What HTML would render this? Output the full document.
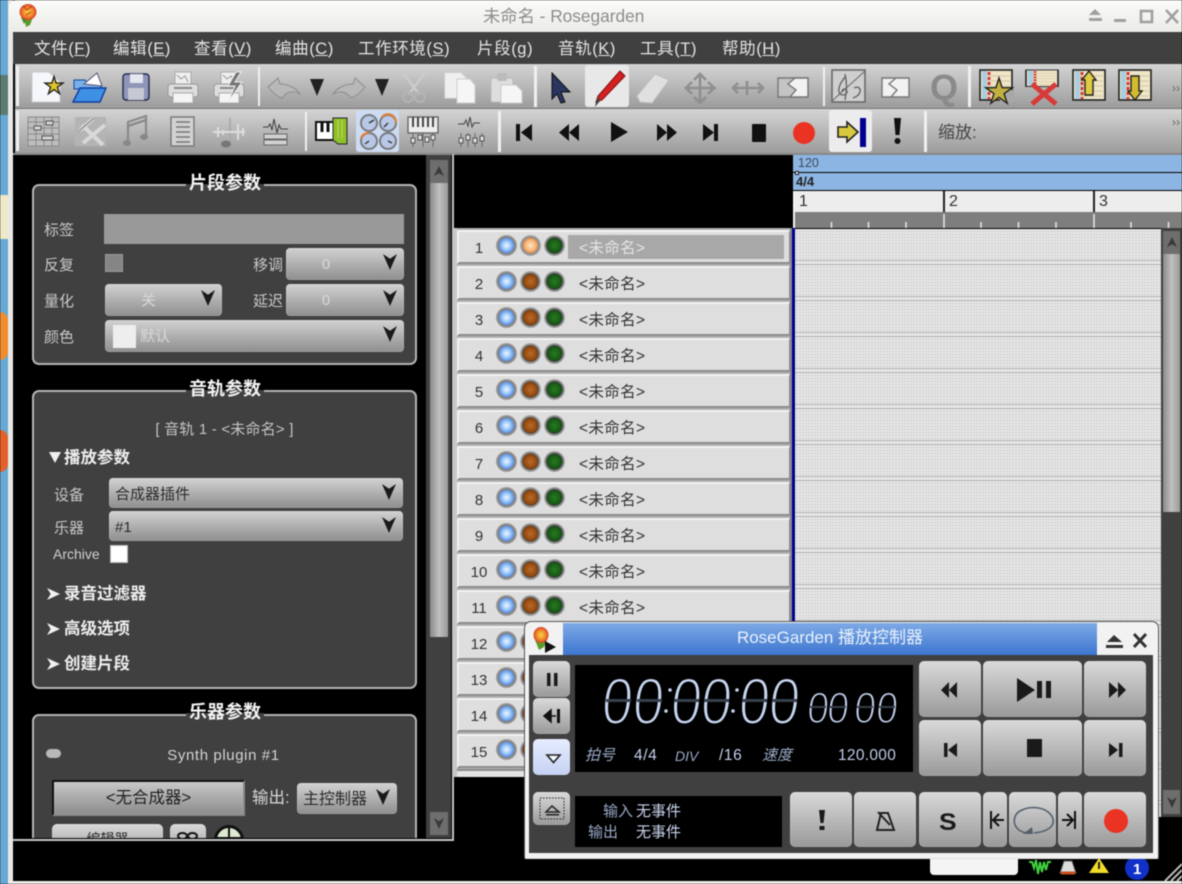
<!DOCTYPE html>
<html lang="zh"><head><meta charset="utf-8"><title>Rosegarden</title>
<style>
*{box-sizing:border-box}
html,body{margin:0;padding:0;background:#000}
body{width:1182px;height:884px;overflow:hidden;position:relative;font-family:"Liberation Sans","Noto Sans CJK SC",sans-serif}
#w{position:absolute;left:0;top:0;width:1182px;height:884px;overflow:hidden;filter:blur(.5px);background:#000}
.a,.t,.c,.b,.g,.r{position:absolute}
.t{white-space:nowrap;line-height:20px;height:20px}
.m{top:39px;font-size:16.5px;letter-spacing:.6px;color:#e4e4e4}
.g{left:32px;width:385px;border:2px solid #b4b4b4;border-radius:7px;background:#404040}
.h{position:absolute;width:78px;left:186px;height:22px;line-height:22px;text-align:center;font-weight:bold;font-size:18px;color:#f4f4f4;background:linear-gradient(#000 0 12px,#404040 12px)}
.l1{font-size:15px;color:#c8c8c8}
.s{font-size:16.5px;font-weight:bold;color:#eee}
.ar{position:absolute;width:13px;height:12px;background:#f0f0f0;clip-path:polygon(0 0,100% 50%,0 100%,28% 50%)}
.c{border-radius:4px;background:linear-gradient(#d2d2d2,#8e8e8e);box-shadow:inset 0 0 0 1px rgba(255,255,255,.12);font-size:15px;color:#d8d8d8;line-height:33px}
.c::after{content:"";position:absolute;right:7px;top:6px;width:14px;height:16px;background:#1a1a1a;clip-path:polygon(0 0,50% 30%,100% 0,50% 100%)}
.b{border-radius:5px;background:linear-gradient(#dadada,#999);box-shadow:inset 0 0 0 1px rgba(255,255,255,.1)}
.tb{position:absolute;left:15px;right:0;background:linear-gradient(#d4d4d4,#9c9c9c)}
.r{left:457px;width:333px;height:34px;background:#dedede;border-top:2px solid #f2f2f2;border-left:2px solid #f2f2f2;border-bottom:2px solid #8c8c8c;border-right:1px solid #8c8c8c}
.r b{position:absolute;left:0;width:40px;text-align:center;top:7px;font-weight:normal;font-size:15px;line-height:20px;color:#333}
.r span{position:absolute;left:120px;top:7px;font-size:15.5px;letter-spacing:.35px;line-height:20px;color:#333;white-space:nowrap}
.r i{position:absolute;width:21px;height:21px;border-radius:50%;top:3px}
.i1{left:36.500px;background:radial-gradient(closest-side,#f0f8ff 0,#a8d0fc 35%,#5f98e8 68%,#7d7d7d 76%,#a4a4a4 100%)}
.i2{left:60.500px;background:radial-gradient(closest-side,#b86a28 0,#93480f 62%,#5c4028 72%,#8a8a8a 84%,#b0b0b0 100%)}
.i3{left:84.500px;background:radial-gradient(closest-side,#2a7a22 0,#145a12 62%,#2c3c2c 72%,#808080 84%,#b0b0b0 100%)}
.r i.on{background:radial-gradient(closest-side,#ffe6c8 0,#f4b070 55%,#e09050 68%,#8a8a8a 78%,#b0b0b0 100%)}
.lc{font-size:15px;color:#b4c4e4}
</style></head><body>
<div id="w">
<!-- desktop strip -->
<div class="a" style="left:0;top:0;width:8px;height:884px;background:#67a8d4"></div>
<div class="a" style="left:0;top:75px;width:8px;height:40px;background:#5c7a70"></div>
<div class="a" style="left:0;top:195px;width:8px;height:44px;background:#efe9c8"></div>
<div class="a" style="left:0;top:312px;width:8px;height:48px;background:#ef8d2f;border-radius:0 10px 10px 0"></div>
<div class="a" style="left:0;top:430px;width:8px;height:42px;background:#e2612a;border-radius:0 10px 10px 0"></div>
<div class="a" style="left:8px;top:0;width:5px;height:884px;background:#e8e8e6"></div>
<div class="a" style="left:8px;top:881px;width:1174px;height:3px;background:#ecece9"></div>
<!-- title bar -->
<div class="a" style="left:9px;top:0;width:1173px;height:32px;background:linear-gradient(#fbfbf9,#ebebe8);border-radius:7px 0 0 0"></div>
<div class="t" style="left:483px;top:6px;font-size:17.300px;color:#8c8c8c">未命名 - Rosegarden</div>
<!-- menu -->
<div class="a" style="left:13px;top:32px;width:1169px;height:32px;background:#404040"></div>
<div class="t m" style="left:34px">文件(<u>F</u>)</div>
<div class="t m" style="left:113px">编辑(<u>E</u>)</div>
<div class="t m" style="left:194px">查看(<u>V</u>)</div>
<div class="t m" style="left:275px">编曲(<u>C</u>)</div>
<div class="t m" style="left:358px">工作环境(<u>S</u>)</div>
<div class="t m" style="left:477px">片段(<u>g</u>)</div>
<div class="t m" style="left:558px">音轨(<u>K</u>)</div>
<div class="t m" style="left:640px">工具(<u>T</u>)</div>
<div class="t m" style="left:722px">帮助(<u>H</u>)</div>
<!-- toolbars -->
<div class="tb" style="top:64px;height:44px"></div>
<div class="tb" style="top:109px;height:44px"></div>
<div class="a" style="left:15px;top:108px;width:1167px;height:1px;background:#777"></div>
<div class="a" style="left:585px;top:65px;width:44px;height:42px;background:#e8e8e8;border-radius:3px"></div>
<div class="a" style="left:356px;top:110px;width:43px;height:42px;background:#cddcf2;border-radius:3px"></div>
<div class="a" style="left:829px;top:110px;width:43px;height:42px;background:#ececec;border-radius:3px"></div>
<div class="t" style="left:938px;top:123px;font-size:17px;color:#444">缩放:</div>
<div class="t" style="left:1172px;top:78px;font-size:12px;color:#666">››</div>
<div class="t" style="left:1172px;top:112px;font-size:12px;color:#666">››</div>

<svg class="a" style="left:0;top:0" width="1182" height="156" viewBox="0 0 1182 156">
<defs>
<path id="star" d="M0-1 .223-.307.951-.309.361.118.588.809 0 .38-.588.809-.361.118-.951-.309-.223-.307Z"/>
<g id="prn"><rect x="8" y="0" width="16" height="13" fill="#eee" stroke="#aaa"/><rect x="1" y="12" width="30" height="13" rx="3" fill="#ddd" stroke="#999"/><rect x="6" y="21" width="20" height="10" fill="#f4f4f4" stroke="#aaa"/><path d="M7 16h18" stroke="#888" stroke-width="2"/><path d="M10 3l4 4 4-3 3 6" fill="none" stroke="#9a9a9a"/></g>
<g id="sheet"><rect x="0" y="0" width="32" height="30" fill="#efe6c8" stroke="#222" stroke-width="1.6"/><path d="M3 6h27M3 11h27M3 16h27M3 21h27M3 26h27" stroke="#d4c8a8"/><rect x="2" y="1" width="5" height="28" fill="#a8cfe0"/><path d="M9 2v27" stroke="#d83838" stroke-width="3" stroke-dasharray="3 2"/></g>
<radialGradient id="rs"><stop offset="0" stop-color="#f7d24a"/><stop offset=".6" stop-color="#ef8a2a"/><stop offset="1" stop-color="#d8402a"/></radialGradient>
</defs>
<!-- rose -->
<path d="M24 17 26 27 30 25 33 17Z" fill="#5a9c2a"/><path d="M21 17l6 2-3 5z" fill="#4a8a22"/><ellipse cx="28" cy="12" rx="8.500" ry="8" fill="url(#rs)"/><path d="M23 6l4 4 5-4M31 12l-5 3" fill="none" stroke="#c43020"/>
<!-- wm buttons -->
<g fill="#a0a0a0"><path d="M1089 15l6-6 6 6z"/><rect x="1089" y="18" width="13" height="3"/><rect x="1114" y="19" width="12" height="3"/></g>
<rect x="1141" y="11" width="11" height="11" fill="none" stroke="#a0a0a0" stroke-width="2.6"/>
<path d="M1166 10l12 13m0-13l-12 13" stroke="#a0a0a0" stroke-width="2.6"/>
<!-- handles / separators -->
<g fill="#f0f0f0"><rect x="16" y="66" width="3" height="40"/><rect x="16" y="111" width="3" height="40"/><rect x="258" y="67" width="2" height="39"/><rect x="534" y="66" width="3" height="41"/><rect x="823" y="67" width="2" height="39"/><rect x="968" y="66" width="3" height="41"/><rect x="305" y="112" width="2" height="39"/><rect x="498" y="111" width="3" height="41"/><rect x="924" y="111" width="3" height="41"/></g>
<!-- toolbar 1 -->
<path d="M32 72H49L60 82V102H32Z" fill="#f5f7fb" stroke="#c8c8d0"/>
<use href="#star" transform="translate(54 86) scale(9.500)" fill="#e0c428" stroke="#222" stroke-width=".14"/>
<path d="M74 80h11l3 3h13v6H74Z" fill="#7ab0e8" stroke="#1048a8"/><path d="M84 84 97 73 102 86Z" fill="#fff" stroke="#557"/><path d="M73 102 80 88H106L100 102Z" fill="#3f8fe4" stroke="#0d3ea0" stroke-width="1.4"/>
<rect x="123" y="74" width="26" height="26" rx="3" fill="#9096b8" stroke="#222a50" stroke-width="1.4"/><rect x="130" y="74" width="13" height="9" fill="#e4e6f0"/><rect x="128" y="88" width="16" height="12" fill="#c6c8d4"/>
<use href="#prn" x="167" y="72"/>
<use href="#prn" x="213" y="72"/><path d="M236 72l-8 14h7l-7 16 14-20h-7l6-10z" fill="#777" stroke="#eee"/>
<path d="M268 87 278 78 280 84C288 84 296 88 300 94 292 90 286 92 282 98 276 96 272 92 268 87Z" fill="#b8b8b8" stroke="#8c8c8c"/>
<path d="M310 79h14l-7 17z" fill="#222"/>
<path d="M365 87 355 78 353 84C345 84 337 88 333 94 341 90 347 92 351 98 357 96 361 92 365 87Z" fill="#b8b8b8" stroke="#8c8c8c"/>
<path d="M375 79h14l-7 17z" fill="#222"/>
<path d="M425 73 409 94M404 74 419 94" stroke="#ccc" stroke-width="2.4"/><circle cx="408" cy="97" r="5" fill="none" stroke="#b4b4b4" stroke-width="2"/><circle cx="420" cy="97" r="5" fill="none" stroke="#b4b4b4" stroke-width="2"/>
<path d="M445 73h16l7 7v18h-23Z" fill="#f0f0f0" stroke="#ddd"/><path d="M457 79h13l5 6v18h-18Z" fill="#f6f6f6" stroke="#ccc"/>
<rect x="491" y="78" width="22" height="24" rx="2" fill="#dedede" stroke="#bbb"/><rect x="497" y="73" width="10" height="8" rx="2" fill="#bbb"/><path d="M501 85h15l6 6v12h-21Z" fill="#f6f6f6" stroke="#ccc"/>
<path d="M552 73 570 92 561 92 565 102 561 103 557 94 552 99Z" fill="#2a3560" stroke="#111"/>
<path d="M620 71 625 76 602 100 596 102 598 96Z" fill="#d42020" stroke="#801010"/><path d="M598 96 596 102 595 107 600 101Z" fill="#444"/>
<path d="M637 96 655 74 669 80 652 103 640 102Z" fill="#e0e0e0" stroke="#c0c0c0"/>
<g fill="none" stroke="#8f8f8f" stroke-width="2.6"><path d="M700 74v30M685 88h31"/><path d="M692 82l-6 6 6 6M708 82l6 6-6 6M694 80l6-6 6 6M694 97l6 6 6-6"/></g>
<g fill="none" stroke="#8f8f8f" stroke-width="2.6"><path d="M733 88h30M747 81v14"/><path d="M738 83l-5 5 5 5M758 83l5 5-5 5"/></g>
<path d="M778 78H808V97H778Z" fill="#c4c4c4" stroke="#777" stroke-width="1.4"/><path d="M795 78 788 84 796 90 790 97H808V78Z" fill="#f2f2f2" stroke="#777" stroke-width="1.4"/>
<rect x="832" y="70" width="33" height="32" fill="#cfcfcf" stroke="#6a6a6a" stroke-width="1.6"/><path d="M832 101 865 71" stroke="#666"/><path d="M846 76c-5 6-8 11-7 16 1 4 7 4 8 0 0-4-5-4-5 0M845 74c2 8 2 16 0 26" fill="none" stroke="#666" stroke-width="1.4"/><path d="M854 88c4-2 7 0 6 4-1 3-4 5-7 6" fill="none" stroke="#666" stroke-width="1.4"/>
<path d="M882 78H909V97H882Z" fill="#f2f2f2" stroke="#777" stroke-width="1.4"/><path d="M896 78 889 84 897 90 891 97" fill="none" stroke="#777" stroke-width="1.4"/>
<text x="930" y="100" font-family="Liberation Sans" font-weight="bold" font-size="36" fill="#8a8a8a">Q</text>
<use href="#sheet" x="980" y="70"/><rect x="1000" y="90" width="14" height="12" fill="#a8a8a8"/><use href="#star" transform="translate(999 92) scale(14)" fill="#c4b040" stroke="#222" stroke-width=".1"/>
<g transform="translate(1026 70)"><use href="#sheet" transform="scale(1 .55)"/></g><path d="M1032 84 1056 104M1056 84 1032 104" stroke="#d83a3a" stroke-width="5"/>
<use href="#sheet" x="1073" y="70"/><path d="M1089 71 1096 80H1093V95H1085V80H1082Z" fill="#e0cc40" stroke="#222" stroke-width="1.4"/>
<use href="#sheet" x="1119" y="70"/><path d="M1135 100 1142 91H1139V76H1131V91H1128Z" fill="#d4bc30" stroke="#222" stroke-width="1.4"/>
<!-- toolbar 2 -->
<g fill="none" stroke="#8a8a8a"><rect x="28" y="117" width="31" height="29" fill="#bdbdbd"/><path d="M28 122h31M28 128h31M28 134h31M28 140h31M36 117v29M44 117v29M52 117v29"/></g><g fill="#d4d4d4" stroke="#555"><rect x="34" y="126" width="7" height="4"/><rect x="46" y="121" width="7" height="4"/><rect x="42" y="136" width="11" height="4"/></g>
<rect x="75" y="117" width="31" height="29" fill="#b4b4b4"/><path d="M80 130l13-11M83 143l22-18M82 125l21 20" stroke="#d8d8d8" stroke-width="4"/><path d="M80 130l13-11" stroke="#777" stroke-width="1"/>
<path d="M128 141V122L146 116V136" fill="none" stroke="#8a8a8a" stroke-width="2.2"/><ellipse cx="127" cy="143" rx="4" ry="3" fill="#888"/><ellipse cx="144" cy="137" rx="4" ry="3" fill="#888"/><path d="M128 126l18-6" stroke="#8a8a8a" stroke-width="2.5"/>
<rect x="171" y="117" width="23" height="29" fill="#d2d2d2" stroke="#777" stroke-width="1.4"/><path d="M176 122h14M176 127h14M176 132h14M176 137h14M176 142h14" stroke="#777" stroke-width="1.4"/>
<path d="M230 118V144" stroke="#aaa" stroke-width="2"/><ellipse cx="226" cy="144" rx="5" ry="3.5" fill="#777"/><path d="M213 132h32M218 127v10M238 124v16M243 128v8M223 130v5" stroke="#ddd" stroke-width="2"/>
<path d="M263 127h5l2-3 2 6 2-11 3 14 2-8 2 4h7" fill="none" stroke="#444" stroke-width="1.1"/><rect x="264" y="134" width="23" height="5" fill="#d0d0d0" stroke="#666"/><rect x="264" y="140" width="23" height="5" fill="#d0d0d0" stroke="#666"/>
<rect x="316" y="122" width="22" height="18" fill="#fff" stroke="#111" stroke-width="2"/><path d="M322 122v10M328 122v10M334 122v10" stroke="#111" stroke-width="3"/><path d="M333 118H347V144H338L333 140Z" fill="#8ec02a" stroke="#223"/><path d="M338 120V138M342 120V138" stroke="#c8d860"/>
<g fill="#b8c8e6" stroke="#7a7a80" stroke-width="2"><circle cx="369" cy="123" r="8"/><circle cx="388" cy="123" r="8"/><circle cx="369" cy="141" r="8"/><circle cx="388" cy="141" r="8"/></g><path d="M382 117a8 8 0 0 1 14 6M361 138a8 8 0 0 1 8-5" fill="none" stroke="#e08038" stroke-width="2.2"/><path d="M369 123l5-3M388 123l-4 4M369 141l-4 3M388 141l4 2" stroke="#333" stroke-width="1.4"/>
<rect x="408" y="117" width="30" height="16" fill="#eee" stroke="#666" stroke-width="1.4"/><path d="M413 117v10M418 117v10M423 117v10M428 117v10M433 117v10" stroke="#444" stroke-width="2"/><path d="M413 133v14M423 133v14M433 133v14" stroke="#666"/><g fill="#ddd" stroke="#555"><rect x="411" y="138" width="4" height="5"/><rect x="418" y="135" width="4" height="5"/><rect x="425" y="137" width="4" height="5"/><rect x="431" y="135" width="4" height="5"/></g>
<path d="M458 124h6l2-4 2 6 2-9 2 10 2-4h6" fill="none" stroke="#444" stroke-width="1"/><path d="M461 133v14M468 133v14M475 133v14M482 133v14" stroke="#666"/><g fill="#ddd" stroke="#555"><rect x="459" y="138" width="4" height="5"/><rect x="466" y="135" width="4" height="5"/><rect x="473" y="138" width="4" height="5"/><rect x="480" y="136" width="4" height="5"/></g>
<g fill="#111"><rect x="516" y="124" width="4" height="17"/><path d="M532 124V141L521 132.5Z"/><path d="M569 124V141L559 132.5ZM579 124V141L569 132.5Z"/><path d="M611 122V142L628 132Z"/><path d="M657 124V141L667 132.5ZM667 124V141L677 132.5Z"/><path d="M703 124V141L714 132.5Z"/><rect x="714" y="124" width="4" height="17"/><rect x="752" y="124" width="14" height="18" rx="1"/></g>
<circle cx="804" cy="133" r="11" fill="#ea3323"/>
<path d="M838 127h9v-5l11 10-11 10v-5h-9Z" fill="#d8c840" stroke="#222" stroke-width="1.6"/><rect x="860" y="118" width="6" height="29" fill="#000090"/>
<path d="M894 118h7l-1.5 17h-4Z" fill="#111"/><circle cx="897.500" cy="141" r="3" fill="#111"/>
</svg>

<!-- left panel -->
<div class="a" style="left:13px;top:153px;width:441px;height:688px;border-right:2px solid #c4c4c4;border-bottom:2px solid #c4c4c4;border-top:2px solid #888;background:#000"></div>
<div class="a" style="left:426px;top:155px;width:25px;height:683px;background:#404040"></div>
<div class="a" style="left:430px;top:160px;width:18px;height:23px;background:#6e6e6e"></div>
<div class="a" style="left:434px;top:166px;width:10px;height:10px;background:#3a3a3a;clip-path:polygon(50% 0,100% 100%,50% 72%,0 100%)"></div>
<div class="a" style="left:430px;top:183px;width:18px;height:454px;background:linear-gradient(90deg,#8a8a8a,#c0c0c0 50%,#9a9a9a)"></div>
<div class="a" style="left:430px;top:812px;width:18px;height:23px;background:#6e6e6e"></div>
<div class="a" style="left:434px;top:818px;width:10px;height:11px;background:#3a3a3a;clip-path:polygon(0 0,50% 30%,100% 0,50% 100%)"></div>

<div class="g" style="top:184px;height:181px"></div>
<div class="h" style="top:172px">片段参数</div>
<div class="t l1" style="left:44px;top:221px">标签</div>
<div class="a" style="left:104px;top:214px;width:300px;height:30px;background:#999"></div>
<div class="t l1" style="left:44px;top:256px">反复</div>
<div class="a" style="left:105px;top:254px;width:18px;height:18px;background:#858585;border:1px solid #999"></div>
<div class="t l1" style="left:253px;top:256px">移调</div>
<div class="c" style="left:286px;top:248px;width:118px;height:32px;text-align:center;padding-right:38px">0</div>
<div class="t l1" style="left:44px;top:292px">量化</div>
<div class="c" style="left:105px;top:284px;width:117px;height:32px;text-align:center;padding-right:30px">关</div>
<div class="t l1" style="left:253px;top:292px">延迟</div>
<div class="c" style="left:286px;top:284px;width:118px;height:32px;text-align:center;padding-right:38px">0</div>
<div class="t l1" style="left:44px;top:328px">颜色</div>
<div class="c" style="left:105px;top:320px;width:299px;height:32px;padding-left:35px">默认</div>
<div class="a" style="left:113px;top:325px;width:23px;height:23px;background:#eee"></div>

<div class="g" style="top:390px;height:299px"></div>
<div class="h" style="top:378px">音轨参数</div>
<div class="t" style="left:32px;width:385px;text-align:center;top:420px;font-size:15px;letter-spacing:.2px;color:#c4c4c4">[ 音轨 1 - &lt;未命名&gt; ]</div>
<div class="a" style="left:49px;top:452px;width:12px;height:11px;background:#f0f0f0;clip-path:polygon(0 0,100% 0,50% 100%)"></div>
<div class="t s" style="left:64px;top:448px">播放参数</div>
<div class="t l1" style="left:54px;top:486px">设备</div>
<div class="c" style="left:109px;top:478px;width:294px;height:30px;padding-left:6px;color:#2c2c2c">合成器插件</div>
<div class="t l1" style="left:54px;top:519px">乐器</div>
<div class="c" style="left:109px;top:511px;width:294px;height:30px;padding-left:6px;color:#2c2c2c">#1</div>
<div class="t" style="left:53px;top:544px;font-size:14px;color:#d0d0d0">Archive</div>
<div class="a" style="left:110px;top:545px;width:18px;height:18px;background:#fff;border:1px solid #bbb"></div>
<div class="ar" style="left:47px;top:588px"></div>
<div class="t s" style="left:64px;top:584px">录音过滤器</div>
<div class="ar" style="left:47px;top:623px"></div>
<div class="t s" style="left:64px;top:619px">高级选项</div>
<div class="ar" style="left:47px;top:658px"></div>
<div class="t s" style="left:64px;top:654px">创建片段</div>

<div class="a" style="left:13px;top:700px;width:413px;height:138px;overflow:hidden">
 <div class="g" style="left:19px;top:14px;height:200px"></div>
 <div class="h" style="left:173px;top:1px">乐器参数</div>
 <div class="a" style="left:33px;top:49px;width:15px;height:9px;border-radius:5px;background:#b8b8b8"></div>
 <div class="t" style="left:19px;width:383px;text-align:center;top:46px;font-size:15px;letter-spacing:.6px;color:#d4d4d4">Synth plugin #1</div>
 <div class="b" style="left:39px;top:80px;width:193px;height:36px;border-radius:0;border:2px solid;border-color:#111 #888 #888 #111;text-align:center;font-size:16.5px;color:#222;line-height:33px;background:linear-gradient(#c8c8c8,#8c8c8c)">&lt;无合成器&gt;</div>
 <div class="t" style="left:239px;top:88px;font-size:16.5px;color:#d8d8d8">输出:</div>
 <div class="c" style="left:284px;top:83px;width:100px;height:31px;padding-left:6px;font-size:16px;color:#2c2c2c;white-space:nowrap">主控制器</div>
 <div class="b" style="left:39px;top:124px;width:111px;height:30px;text-align:center;font-size:14px;line-height:30px;color:#222">编辑器</div>
 <div class="b" style="left:157px;top:124px;width:36px;height:30px"></div>
 <div class="a" style="left:164px;top:132px;width:11px;height:8px;border:2px solid #111;border-radius:50%"></div>
 <div class="a" style="left:174px;top:132px;width:11px;height:8px;border:2px solid #111;border-radius:50%"></div>
 <div class="a" style="left:201px;top:125px;width:30px;height:30px;border-radius:50%;background:#dfe8d0;border:3px solid #111"></div>
 <div class="a" style="left:215px;top:127px;width:2px;height:20px;background:#111"></div>
 <div class="a" style="left:204px;top:137px;width:24px;height:2px;background:#111"></div>
</div>

<!-- ruler -->
<div class="a" style="left:454px;top:153px;width:728px;height:2px;background:#888"></div>
<div class="a" style="left:793px;top:155px;width:389px;height:17px;background:#8db5e3"></div>
<div class="a" style="left:793px;top:173px;width:389px;height:17px;background:#8db5e3"></div>
<div class="a" style="left:795px;top:171px;width:4px;height:4px;background:#eee;border:1px solid #222"></div>
<div class="t" style="left:798px;top:153px;font-size:12.500px;color:#3a4a60">120</div>
<div class="t" style="left:796px;top:172px;font-size:13px;font-weight:bold;color:#222">4/4</div>
<div class="a" style="left:794px;top:191px;width:388px;height:21px;background:#ededed"></div>
<div class="a" style="left:794px;top:212px;width:388px;height:16px;background:#7e7e7e"></div>
<div class="a" style="left:793px;top:191px;width:2px;height:37px;background:#f4f4f4"></div>
<div class="a" style="left:943px;top:191px;width:2px;height:21px;background:#222"></div>
<div class="a" style="left:1093px;top:191px;width:2px;height:21px;background:#222"></div>
<div class="t" style="left:799px;top:192px;font-size:16px;color:#333">1</div>
<div class="t" style="left:949px;top:192px;font-size:16px;color:#333">2</div>
<div class="t" style="left:1099px;top:192px;font-size:16px;color:#333">3</div>
<svg class="a" style="left:794px;top:212px" width="388" height="16"><g stroke="#e8e8e8" stroke-width="1.500"><path d="M37.500 10V16M74.500 10V16M112 10V16M187 10V16M224.500 10V16M262 10V16M337 10V16M374.500 10V16"/><path d="M150 2V16M300 2V16"/></g></svg>

<!-- track list backing -->
<div class="a" style="left:454px;top:228px;width:338px;height:549px;background:#b0b0b0;border-left:3px solid #c8c8c8"></div>
<div class="a" style="left:790px;top:228px;width:2px;height:549px;background:#8a8a8a"></div>
<div class="a" style="left:792px;top:228px;width:3px;height:549px;background:#000090"></div>
<div class="a" style="left:457px;top:769px;width:333px;height:8px;background:#e4e4e4;border-top:2px solid #8c8c8c"></div>

<div class="r" style="top:230px"><b>1</b><i class="i1"></i><i class="i2 on"></i><i class="i3"></i><div class="a" style="left:109px;top:3px;width:216px;height:24px;background:#a8a8a8"></div><span style="color:#e4e4e4">&lt;未命名&gt;</span></div>
<div class="r" style="top:266px"><b>2</b><i class="i1"></i><i class="i2"></i><i class="i3"></i><span>&lt;未命名&gt;</span></div>
<div class="r" style="top:302px"><b>3</b><i class="i1"></i><i class="i2"></i><i class="i3"></i><span>&lt;未命名&gt;</span></div>
<div class="r" style="top:338px"><b>4</b><i class="i1"></i><i class="i2"></i><i class="i3"></i><span>&lt;未命名&gt;</span></div>
<div class="r" style="top:374px"><b>5</b><i class="i1"></i><i class="i2"></i><i class="i3"></i><span>&lt;未命名&gt;</span></div>
<div class="r" style="top:410px"><b>6</b><i class="i1"></i><i class="i2"></i><i class="i3"></i><span>&lt;未命名&gt;</span></div>
<div class="r" style="top:446px"><b>7</b><i class="i1"></i><i class="i2"></i><i class="i3"></i><span>&lt;未命名&gt;</span></div>
<div class="r" style="top:482px"><b>8</b><i class="i1"></i><i class="i2"></i><i class="i3"></i><span>&lt;未命名&gt;</span></div>
<div class="r" style="top:518px"><b>9</b><i class="i1"></i><i class="i2"></i><i class="i3"></i><span>&lt;未命名&gt;</span></div>
<div class="r" style="top:554px"><b>10</b><i class="i1"></i><i class="i2"></i><i class="i3"></i><span>&lt;未命名&gt;</span></div>
<div class="r" style="top:590px"><b>11</b><i class="i1"></i><i class="i2"></i><i class="i3"></i><span>&lt;未命名&gt;</span></div>
<div class="r" style="top:626px"><b>12</b><i class="i1"></i><i class="i2"></i><i class="i3"></i><span>&lt;未命名&gt;</span></div>
<div class="r" style="top:662px"><b>13</b><i class="i1"></i><i class="i2"></i><i class="i3"></i><span>&lt;未命名&gt;</span></div>
<div class="r" style="top:698px"><b>14</b><i class="i1"></i><i class="i2"></i><i class="i3"></i><span>&lt;未命名&gt;</span></div>
<div class="r" style="top:734px"><b>15</b><i class="i1"></i><i class="i2"></i><i class="i3"></i><span>&lt;未命名&gt;</span></div>

<!-- segment canvas -->
<div class="a" style="left:795px;top:229px;width:366px;height:588px;background:repeating-linear-gradient(90deg,rgba(255,255,255,.3) 0 1px,rgba(0,0,0,0) 1px 3px),repeating-linear-gradient(0deg,rgba(0,0,0,.06) 0 1px,rgba(0,0,0,0) 1px 3px),repeating-linear-gradient(180deg,#e0e0e0 0 31px,#b4b4b4 31px 32px,#e6e6e6 32px 35px,#b0b0b0 35px 36px)"></div>
<div class="a" style="left:1161px;top:228px;width:21px;height:589px;background:#404040"></div>
<div class="a" style="left:1163px;top:231px;width:17px;height:23px;background:#6e6e6e"></div>
<div class="a" style="left:1167px;top:237px;width:10px;height:10px;background:#3a3a3a;clip-path:polygon(50% 0,100% 100%,50% 72%,0 100%)"></div>
<div class="a" style="left:1163px;top:254px;width:17px;height:258px;background:linear-gradient(90deg,#8a8a8a,#c0c0c0 50%,#9a9a9a)"></div>
<div class="a" style="left:1163px;top:790px;width:17px;height:24px;background:#6e6e6e"></div>
<div class="a" style="left:1167px;top:797px;width:10px;height:11px;background:#3a3a3a;clip-path:polygon(0 0,50% 30%,100% 0,50% 100%)"></div>

<!-- status bar -->
<div class="a" style="left:930px;top:858px;width:88px;height:17px;background:#f4f4f4;border-radius:0 0 4px 4px"></div>
<svg class="a" style="left:1020px;top:855px" width="162" height="26"><path d="M9 7h3l2 6 2-8 2 14 2-12 2 10 2-10 2 8 2-8h3" fill="none" stroke="#3fd03f" stroke-width="2"/><path d="M44 6h8l4 12H40Z" fill="#ddd" stroke="#555"/><path d="M41 18h14" stroke="#c85020" stroke-width="3"/><path d="M69 18 79 3 89 18Z" fill="#f0dc28"/><path d="M79 7v7" stroke="#222" stroke-width="2"/><circle cx="117" cy="13" r="12" fill="#1030c8"/><text x="113" y="19" font-family="Liberation Sans" font-weight="bold" font-size="15" fill="#fff">1</text><path d="M145 26 162 9M151 26 162 15M157 26 162 21" stroke="#bbb" stroke-width="2"/></svg>

<!-- transport window -->
<div class="a" style="left:524px;top:621px;width:635px;height:238px;background:#f2f2f2;border-radius:7px 7px 2px 2px;border:1px solid #555;border-bottom-color:#ddd"></div>
<div class="a" style="left:529px;top:655px;width:624px;height:198px;background:#404040"></div>
<div class="a" style="left:563px;top:623px;width:534px;height:32px;background:linear-gradient(#7da9e6,#3d76cf)"></div>
<div class="t" style="left:563px;width:534px;text-align:center;top:628px;font-size:17px;color:#eaf1fb">RoseGarden 播放控制器</div>
<div class="a" style="left:575px;top:665px;width:338px;height:107px;background:#000"></div>
<div class="a" style="left:575px;top:796px;width:207px;height:51px;background:#000"></div>

<div class="b" style="left:533px;top:661px;width:37px;height:36px"></div>
<div class="b" style="left:533px;top:698px;width:37px;height:36px"></div>
<div class="b" style="left:533px;top:739px;width:37px;height:36px;background:linear-gradient(#e6ecff,#c6d2f4)"></div>
<div class="b" style="left:533px;top:792px;width:37px;height:33px"></div>
<div class="b" style="left:790px;top:792px;width:62px;height:55px"></div>
<div class="b" style="left:854px;top:792px;width:62px;height:55px"></div>
<div class="b" style="left:919px;top:792px;width:62px;height:55px"></div>
<div class="b" style="left:983px;top:792px;width:24px;height:55px"></div>
<div class="b" style="left:1009px;top:792px;width:47px;height:55px"></div>
<div class="b" style="left:1058px;top:792px;width:24px;height:55px"></div>
<div class="b" style="left:1084px;top:792px;width:62px;height:55px"></div>
<div class="b" style="left:919px;top:661px;width:62px;height:56px"></div>
<div class="b" style="left:983px;top:661px;width:99px;height:56px"></div>
<div class="b" style="left:1084px;top:661px;width:62px;height:56px"></div>
<div class="b" style="left:919px;top:720px;width:62px;height:56px"></div>
<div class="b" style="left:983px;top:720px;width:99px;height:56px"></div>
<div class="b" style="left:1084px;top:720px;width:62px;height:56px"></div>

<svg class="a" style="left:524px;top:621px" width="635" height="238" viewBox="524 621 635 238">
<!-- icon -->
<path d="M535 640 539 650 544 647 547 640Z" fill="#5a9c2a"/><ellipse cx="541" cy="635" rx="7.500" ry="8" fill="url(#rs)"/><path d="M545 641 556 647 545 653Z" fill="#111"/>
<path d="M1107 642l7-7 8 7z" fill="#333"/><rect x="1106" y="645" width="17" height="3" fill="#333"/>
<path d="M1134 634l12 13m0-13l-12 13" stroke="#333" stroke-width="3"/>
<!-- left buttons -->
<rect x="547" y="673" width="3.500" height="13" fill="#1a1a1a"/><rect x="554" y="673" width="3.500" height="13" fill="#1a1a1a"/>
<path d="M544 716l7-6v12zM546 716h10" fill="#111" stroke="#111" stroke-width="1.500"/><rect x="557" y="709" width="3" height="14" fill="#111"/>
<path d="M547 755h13l-6.500 7.500z" fill="#f4f8ff" stroke="#222" stroke-width="1.600"/>
<rect x="540" y="798" width="24" height="21" fill="none" stroke="#222" stroke-dasharray="1.500 1.500"/><path d="M546 812l6-6 7 6z" fill="none" stroke="#222" stroke-width="1.500"/><rect x="546" y="814" width="13" height="1.500" fill="#222"/>
<!-- lcd big -->
<g font-family="Liberation Sans" font-size="66" fill="#c6d5f0" stroke="#000" stroke-width="2.200">
<text transform="matrix(.84 0 -.1 1 600 724)">0</text>
<text transform="matrix(.84 0 -.1 1 631 724)">0</text>
<text transform="matrix(.84 0 -.1 1 669 724)">0</text>
<text transform="matrix(.84 0 -.1 1 699 724)">0</text>
<text transform="matrix(.84 0 -.1 1 737 724)">0</text>
<text transform="matrix(.84 0 -.1 1 767 724)">0</text>
</g>
<g font-family="Liberation Sans" font-size="44" fill="#c0cee8" stroke="#000" stroke-width="1.500">
<text transform="matrix(.88 0 -.1 1 806 723)">0</text>
<text transform="matrix(.88 0 -.1 1 826 723)">0</text>
<text transform="matrix(.88 0 -.1 1 853 723)">0</text>
<text transform="matrix(.88 0 -.1 1 875 723)">0</text>
</g>
<g fill="#36404c"><rect x="606" y="699" width="25" height="3"/><rect x="637" y="699" width="25" height="3"/><rect x="674" y="699" width="25" height="3"/><rect x="704" y="699" width="25" height="3"/><rect x="742" y="699" width="25" height="3"/><rect x="772" y="699" width="25" height="3"/><rect x="810" y="706" width="16" height="2"/><rect x="830" y="706" width="16" height="2"/><rect x="857" y="706" width="16" height="2"/><rect x="879" y="706" width="16" height="2"/></g>
<g fill="#c4d2ec"><circle cx="670" cy="690" r="1.800"/><circle cx="666" cy="711" r="1.800"/><circle cx="737" cy="690" r="1.800"/><circle cx="733" cy="711" r="1.800"/></g>
<!-- transport icons -->
<g fill="#1a1a1a"><path d="M941 690 949 682V698ZM949 690 957 682V698Z"/><path d="M1017 678 1035 690 1017 702Z"/><rect x="1037" y="681" width="5" height="17"/><rect x="1046" y="681" width="5" height="17"/><path d="M1109 682 1118 690 1109 698ZM1118 682 1126 690 1118 698Z"/>
<rect x="944" y="743" width="3.500" height="14"/><path d="M957 743V757L948 750Z"/><rect x="1027" y="739" width="15" height="18"/><path d="M1109 743 1118 750 1109 757Z"/><rect x="1119" y="743" width="3.500" height="14"/></g>
<circle cx="1116" cy="821" r="12" fill="#ea3323"/>
<path d="M819 810h6l-1.500 13h-3zM819.500 826h5v4h-5z" fill="#1a1a1a"/>
<path d="M881 813h7l6 17h-17ZM878 812l12 13" fill="none" stroke="#222" stroke-width="2"/>
<text transform="matrix(1.100 0 0 1 939 830)" font-family="Liberation Sans" font-weight="bold" font-size="24" fill="#1a1a1a">S</text>
<path d="M991 811v18M1004 820h-10M999 814l-6 6 6 6" fill="none" stroke="#111" stroke-width="2"/>
<path d="M1075 811v18M1062 820h10M1067 814l6 6-6 6" fill="none" stroke="#111" stroke-width="2"/>
<path d="M1027 833C1012 831 1011 816 1020 811 1032 804 1050 808 1053 819 1055 827 1046 832 1034 833" fill="none" stroke="#55606c" stroke-width="1.600"/><path d="M1023 834 1032 827 1033 834Z" fill="#55606c"/>
</svg>
<div class="t lc" style="left:585px;top:746px;font-style:italic;color:#9aaac8">拍号</div>
<div class="t lc" style="left:634px;top:746px;font-size:15.5px;letter-spacing:.6px;color:#c4d2ee">4/4</div>
<div class="t lc" style="left:675px;top:746px;font-size:14px;font-style:italic;color:#9aaac8">DIV</div>
<div class="t lc" style="left:719px;top:746px;font-size:15.5px;letter-spacing:.6px;color:#c4d2ee">/16</div>
<div class="t lc" style="left:762px;top:746px;font-style:italic;color:#9aaac8">速度</div>
<div class="t lc" style="left:838px;top:746px;font-size:15.5px;letter-spacing:.3px;color:#c0cee8">120.000</div>
<div class="t lc" style="left:603px;top:802px;color:#9aaac8">输入</div>
<div class="t lc" style="left:636px;top:802px;color:#c8d4ec">无事件</div>
<div class="t lc" style="left:588px;top:823px;color:#9aaac8">输出</div>
<div class="t lc" style="left:636px;top:823px;color:#c8d4ec">无事件</div>
</div>
</body></html>
